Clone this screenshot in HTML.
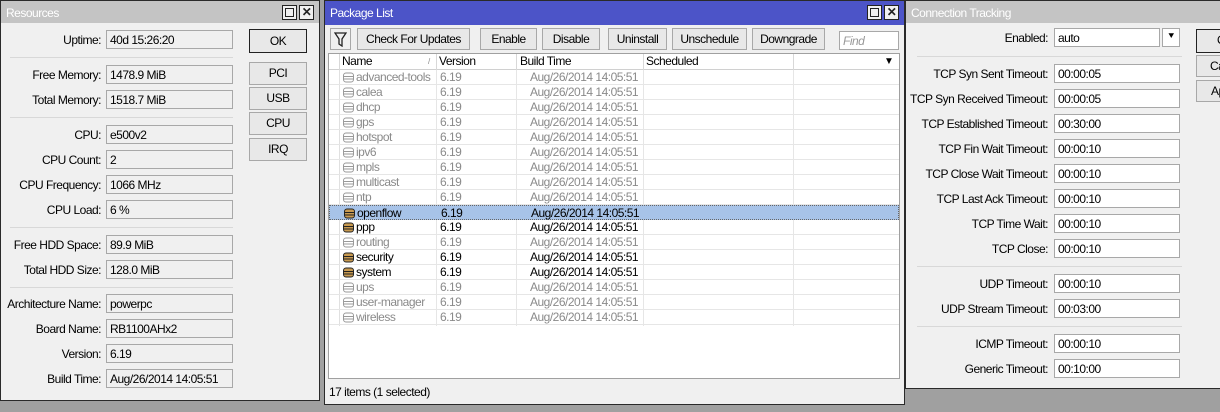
<!DOCTYPE html>
<html><head><meta charset="utf-8"><style>
*{box-sizing:border-box;margin:0;padding:0}
body{width:1220px;height:412px;background:#a0a0a0;position:relative;overflow:hidden;font-family:"Liberation Sans",sans-serif;font-size:12px;color:#000;letter-spacing:-0.5px}
.a{position:absolute}
.win{position:absolute;background:#f0f0f0;border:1px solid #2a2a2a}
.tb{position:absolute;left:0;right:0;top:0;height:22px;background:#c4c4c4;color:#fff;font-size:12px;padding:5px 0 0 5px}
.tb.blue{background:#4c54c8;height:24px}
.tbtn{position:absolute;top:4px;width:15px;height:15px;border:1px solid #222;background:#f0f0f0}
.lbl{position:absolute;text-align:right;width:200px;line-height:18px}
.fld{position:absolute;height:19px;border:1px solid #a8a8a8;background:#f0f0f0;padding:2px 0 0 3px;line-height:14px}
.fw{background:#fff}
.sep{position:absolute;height:1px;background:#d8d8d8}
.btn{position:absolute;border:1px solid #a8a8a8;background:#e8e8e8;text-align:center;line-height:21px}
.row{position:absolute;left:3px;width:570px;height:15px;line-height:15px;border-bottom:1px solid #e6e6e6;color:#8a8a8a}
.row span{position:absolute;top:0}
.row.en{color:#000}
.row.sel{background:#a7c3e8;border:1px dotted #666}
.ic{position:absolute;left:14px;top:2px}
</style></head><body>

<!-- Resources -->
<div class="win" style="left:0;top:0;width:320px;height:401px">
<div class="tb">Resources</div>
<div class="tbtn" style="left:281px"><div style="margin:2px;width:9px;height:9px;border:1px solid #222"></div></div>
<div class="tbtn" style="left:298px;font-size:12px;font-weight:bold;line-height:12px;text-align:center;color:#222">✕</div>
</div>
<div class="a" style="left:0;top:0">
<div class="lbl" style="left:-99px;top:31px">Uptime:</div><div class="fld" style="left:106px;top:30px;width:127px">40d 15:26:20</div>
<div class="sep" style="left:10px;top:57px;width:223px"></div>
<div class="lbl" style="left:-99px;top:66px">Free Memory:</div><div class="fld" style="left:106px;top:65px;width:127px">1478.9 MiB</div>
<div class="lbl" style="left:-99px;top:91px">Total Memory:</div><div class="fld" style="left:106px;top:90px;width:127px">1518.7 MiB</div>
<div class="sep" style="left:10px;top:117px;width:223px"></div>
<div class="lbl" style="left:-99px;top:126px">CPU:</div><div class="fld" style="left:106px;top:125px;width:127px">e500v2</div>
<div class="lbl" style="left:-99px;top:151px">CPU Count:</div><div class="fld" style="left:106px;top:150px;width:127px">2</div>
<div class="lbl" style="left:-99px;top:176px">CPU Frequency:</div><div class="fld" style="left:106px;top:175px;width:127px">1066 MHz</div>
<div class="lbl" style="left:-99px;top:201px">CPU Load:</div><div class="fld" style="left:106px;top:200px;width:127px">6 %</div>
<div class="sep" style="left:10px;top:227px;width:223px"></div>
<div class="lbl" style="left:-99px;top:236px">Free HDD Space:</div><div class="fld" style="left:106px;top:235px;width:127px">89.9 MiB</div>
<div class="lbl" style="left:-99px;top:261px">Total HDD Size:</div><div class="fld" style="left:106px;top:260px;width:127px">128.0 MiB</div>
<div class="sep" style="left:10px;top:287px;width:223px"></div>
<div class="lbl" style="left:-99px;top:295px">Architecture Name:</div><div class="fld" style="left:106px;top:294px;width:127px">powerpc</div>
<div class="lbl" style="left:-99px;top:320px">Board Name:</div><div class="fld" style="left:106px;top:319px;width:127px">RB1100AHx2</div>
<div class="lbl" style="left:-99px;top:345px">Version:</div><div class="fld" style="left:106px;top:344px;width:127px">6.19</div>
<div class="lbl" style="left:-99px;top:370px">Build Time:</div><div class="fld" style="left:106px;top:369px;width:127px">Aug/26/2014 14:05:51</div>
<div class="btn" style="left:249px;top:29px;width:58px;height:24px;border-color:#222;line-height:22px">OK</div>
<div class="btn" style="left:249px;top:62px;width:58px;height:23px">PCI</div>
<div class="btn" style="left:249px;top:87px;width:58px;height:23px">USB</div>
<div class="btn" style="left:249px;top:112px;width:58px;height:23px">CPU</div>
<div class="btn" style="left:249px;top:138px;width:58px;height:23px">IRQ</div>
</div>

<!-- Package List -->
<div class="win" style="left:324px;top:0;width:581px;height:405px">
<div class="tb blue" style="color:#fff">Package List</div>
<div class="tbtn" style="left:542px"><div style="margin:2px;width:9px;height:9px;border:1px solid #222"></div></div>
<div class="tbtn" style="left:559px;font-weight:bold;line-height:12px;text-align:center;color:#222">✕</div>
<div class="btn" style="left:5px;top:27px;width:21px;height:22px;background:#f0f0f0"><svg width="13" height="15" viewBox="0 0 13 15" style="margin-top:3px"><path d="M1 1h11l-4 6v7l-3-2V7z" fill="none" stroke="#222" stroke-width="1.3"/></svg></div>
<div class="btn" style="left:32px;top:27px;width:113px;height:22px">Check For Updates</div>
<div class="btn" style="left:155px;top:27px;width:57px;height:22px">Enable</div>
<div class="btn" style="left:217px;top:27px;width:58px;height:22px">Disable</div>
<div class="btn" style="left:283px;top:27px;width:59px;height:22px">Uninstall</div>
<div class="btn" style="left:347px;top:27px;width:75px;height:22px">Unschedule</div>
<div class="btn" style="left:427px;top:27px;width:73px;height:22px">Downgrade</div>
<div class="fld fw" style="left:514px;top:30px;width:60px;height:19px;color:#999;font-style:italic">Find</div>
<div class="a" style="left:3px;top:52px;width:572px;height:326px;background:#fff;border:1px solid #a0a0a0">
 <div class="a" style="left:0;top:0;width:570px;height:16px;background:#fff;border-bottom:1px solid #d0d0d0;line-height:15px">
  <span class="a" style="left:10px;top:0;width:1px;height:16px;background:#d8d8d8"></span>
  <span class="a" style="left:13px">Name</span><span class="a" style="left:99px;font-size:8px;color:#888">/</span>
  <span class="a" style="left:107px;top:0;width:1px;height:16px;background:#d8d8d8"></span><span class="a" style="left:110px">Version</span>
  <span class="a" style="left:187px;top:0;width:1px;height:16px;background:#d8d8d8"></span><span class="a" style="left:191px">Build Time</span>
  <span class="a" style="left:314px;top:0;width:1px;height:16px;background:#d8d8d8"></span><span class="a" style="left:317px">Scheduled</span>
  <span class="a" style="left:464px;top:0;width:1px;height:16px;background:#d8d8d8"></span>
  <span class="a" style="left:555px;top:0;font-size:10px">▼</span>
 </div>
 <div class="a" style="left:10px;top:16px;width:1px;height:256px;background:#e0e0e0"></div>
 <div class="a" style="left:107px;top:16px;width:1px;height:256px;background:#e6e6e6"></div>
 <div class="a" style="left:187px;top:16px;width:1px;height:256px;background:#e6e6e6"></div>
 <div class="a" style="left:314px;top:16px;width:1px;height:256px;background:#e6e6e6"></div>
 <div class="a" style="left:464px;top:16px;width:1px;height:256px;background:#e6e6e6"></div>
 <div id="rows"></div>
</div>
<div class="a" style="left:4px;top:384px">17 items (1 selected)</div>
</div>

<!-- Connection Tracking -->
<div class="win" style="left:905px;top:0;width:320px;height:389px">
<div class="tb">Connection Tracking</div>
</div>
<div class="a" style="left:905px;top:0">
<div class="lbl" style="left:-57px;top:29px">Enabled:</div><div class="fld fw" style="left:149px;top:28px;width:106px">auto</div>
<div class="btn" style="left:257px;top:28px;width:18px;height:19px;background:#fff;line-height:15px;font-size:10px">⯆</div>
<div class="sep" style="left:12px;top:56px;width:265px"></div>
</div>
<div id="ct" class="a" style="left:905px;top:0"></div>
<div class="btn" style="left:1196px;top:29px;width:40px;height:24px;border-color:#222;text-align:left;padding-left:20px">OK</div>
<div class="btn" style="left:1196px;top:55px;width:40px;height:22px;text-align:left;padding-left:13px">Cancel</div>
<div class="btn" style="left:1196px;top:80px;width:40px;height:22px;text-align:left;padding-left:14px">Apply</div>

<script>
var p=["advanced-tools","calea","dhcp","gps","hotspot","ipv6","mpls","multicast","ntp","openflow","ppp","routing","security","system","ups","user-manager","wireless"];
var en={openflow:1,ppp:1,security:1,system:1};
var h="";
p.forEach(function(n,i){
 var e=en[n],c="row"+(e?" en":"")+(n=="openflow"?" sel":"");
 var f=e?"#c89a50":"#fff",s=e?"#222":"#999";
 h+='<div class="'+c+'" style="top:'+(16+i*15)+'px;left:0"><svg class="ic" width="11" height="11" viewBox="0 0 11 11"><rect x="0.5" y="1" width="10" height="9" rx="2.5" fill="'+f+'" stroke="'+s+'"/><path d="M0.5 4.5h10M0.5 7h10" stroke="'+s+'"/></svg><span style="left:27px">'+n+'</span><span style="left:111px">6.19</span><span style="left:201px">Aug/26/2014 14:05:51</span></div>';
});
document.getElementById("rows").innerHTML=h;
var ct=[["TCP Syn Sent Timeout:","00:00:05",64],["TCP Syn Received Timeout:","00:00:05",89],["TCP Established Timeout:","00:30:00",114],["TCP Fin Wait Timeout:","00:00:10",139],["TCP Close Wait Timeout:","00:00:10",164],["TCP Last Ack Timeout:","00:00:10",189],["TCP Time Wait:","00:00:10",214],["TCP Close:","00:00:10",239],["UDP Timeout:","00:00:10",274],["UDP Stream Timeout:","00:03:00",299],["ICMP Timeout:","00:00:10",334],["Generic Timeout:","00:10:00",359]];
var g='<div class="sep" style="left:12px;top:266px;width:265px"></div><div class="sep" style="left:12px;top:326px;width:265px"></div>';
ct.forEach(function(r){g+='<div class="lbl" style="left:-57px;top:'+(r[2]+1)+'px">'+r[0]+'</div><div class="fld fw" style="left:149px;top:'+r[2]+'px;width:126px">'+r[1]+'</div>';});
document.getElementById("ct").innerHTML=g;
</script>
</body></html>
